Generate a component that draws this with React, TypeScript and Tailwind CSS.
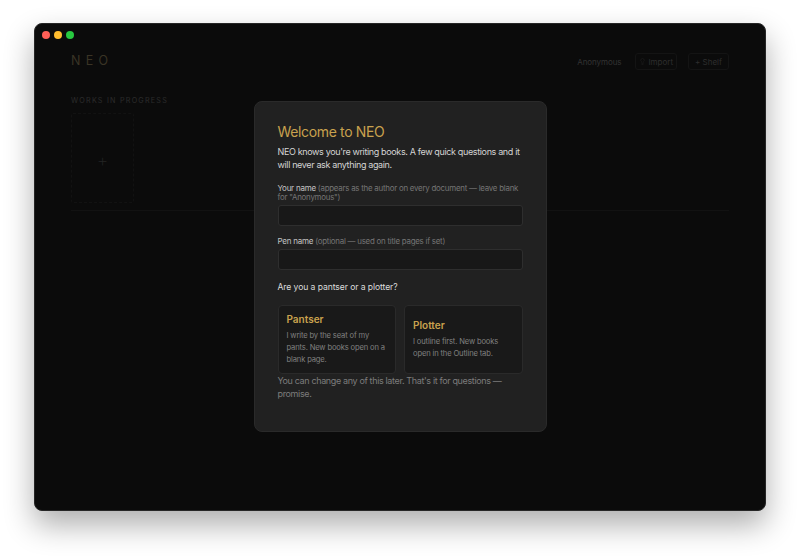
import React from 'react';
import { Lightbulb } from 'lucide-react';

const font = { fontFamily: 'Inter, "Liberation Sans", sans-serif' };

function ChoiceCard({ title, text }: { title: string; text: string }) {
  return (
    <div className="flex-1 h-[69px] flex flex-col justify-center pl-[8px] pr-[5px] rounded-[4px] border border-[#2a2a2a] bg-[#191919]">
      <div className="text-[10px] leading-[13px] font-semibold text-[#c9a24e]">{title}</div>
      <div className="mt-[4px] text-[7.6px] leading-[12px] tracking-[-0.02em] text-[#808080]">{text}</div>
    </div>
  );
}

function Background() {
  return (
    <div className="h-full px-[36px] pt-[29px]">
      <div className="flex items-center justify-between h-[17px]">
        <div className="text-[12.5px] tracking-[0.42em] text-[#3a3425]">NEO</div>
        <div className="flex items-center">
          <span className="text-[8px] tracking-[-0.01em] text-[#333333]">Anonymous</span>
          <span className="ml-[14px] h-[17px] px-[3px] flex items-center gap-[2px] rounded-[3px] border border-[#141414] text-[8px] text-[#2e2e2e]">
            <Lightbulb size={7} strokeWidth={1.2} className="text-[#2e2e2e]" />
            Import
          </span>
          <span className="ml-[11px] h-[17px] px-[6px] flex items-center rounded-[3px] border border-[#141414] text-[8px] text-[#2e2e2e]">
            + Shelf
          </span>
        </div>
      </div>
      <div className="mt-[26px] text-[7.2px] leading-[9px] tracking-[0.17em] text-[#2b2b2b]">WORKS IN PROGRESS</div>
      <div className="mt-[8px] pt-[6px] w-[63px] h-[90px] flex items-center justify-center rounded-[2px] border border-dashed border-[#121212]">
        <span className="text-[18px] font-extralight leading-none text-[#242424]">+</span>
      </div>
      <div className="mt-[7px] h-px bg-[#121212]" />
    </div>
  );
}

function WelcomeModal() {
  return (
    <div className="w-[293px] h-[331px] px-[23px] pt-[21px] rounded-[8px] border border-[#2a2a2a] bg-[#212121]">
      <h2 className="text-[14px] leading-[18px] font-normal tracking-[-0.025em] text-[#c9a24e]">Welcome to NEO</h2>
      <p className="mt-[4px] text-[9px] leading-[13px] tracking-[-0.04em] text-[#d4d4d4]">
        NEO knows you're writing books. A few quick questions and it will never ask anything again.
      </p>
      <div className="mt-[13px] text-[8px] leading-[9px] tracking-[-0.03em] text-[#c4c4c4]">
        Your name <span className="text-[7.9px] text-[#757575]">(appears as the author on every document — leave blank for "Anonymous")</span>
      </div>
      <div className="mt-[3px] h-[21px] rounded-[3px] border border-[#2e2e2e] bg-[#181818]" />
      <div className="mt-[11px] text-[8px] leading-[9px] tracking-[-0.03em] text-[#c4c4c4]">
        Pen name <span className="text-[7.9px] text-[#757575]">(optional — used on title pages if set)</span>
      </div>
      <div className="mt-[3px] h-[21px] rounded-[3px] border border-[#2e2e2e] bg-[#181818]" />
      <div className="mt-[12px] text-[8.6px] leading-[11px] tracking-[-0.01em] text-[#dcdcdc]">Are you a pantser or a plotter?</div>
      <div className="mt-[12px] flex gap-[8px]">
        <ChoiceCard title="Pantser" text="I write by the seat of my pants. New books open on a blank page." />
        <ChoiceCard title="Plotter" text="I outline first. New books open in the Outline tab." />
      </div>
      <p className="text-[9px] leading-[13px] tracking-[-0.04em] text-[#7c7c7c]">
        You can change any of this later. That's it for questions — promise.
      </p>
    </div>
  );
}

export default function App() {
  return (
    <div className="w-[800px] h-[556px] bg-white px-[34px] pt-[23px] overflow-hidden" style={font}>
      <div className="relative h-[488px] rounded-[8px] bg-[#0b0b0b] border border-[#262626] shadow-[0_14px_30px_rgba(0,0,0,0.32)]">
        <div className="absolute left-[7px] top-[7px] flex gap-[4px]">
          <span className="w-[8px] h-[8px] rounded-full bg-[#ff5f57]" />
          <span className="w-[8px] h-[8px] rounded-full bg-[#febc2e]" />
          <span className="w-[8px] h-[8px] rounded-full bg-[#28c840]" />
        </div>
        <Background />
        <div className="absolute inset-0 flex justify-center pt-[77px]">
          <WelcomeModal />
        </div>
      </div>
    </div>
  );
}
